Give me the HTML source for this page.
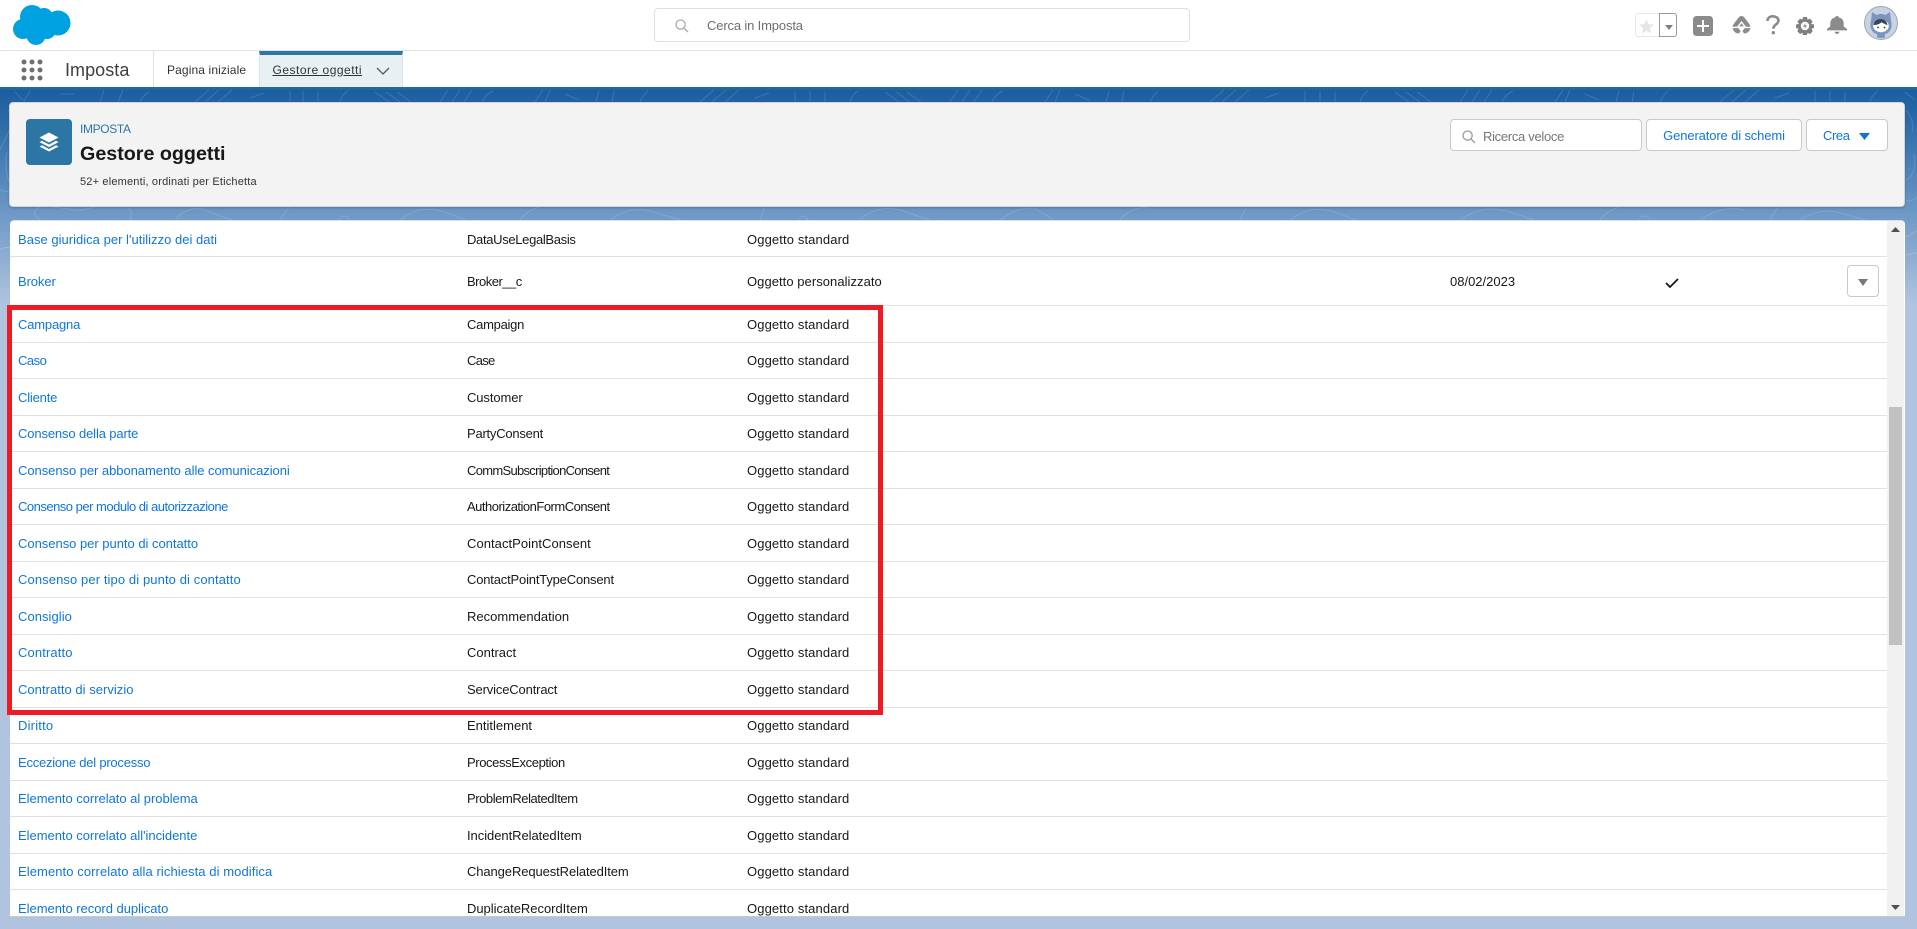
<!DOCTYPE html>
<html lang="it"><head><meta charset="utf-8"><title>Gestore oggetti</title>
<style>
*{box-sizing:border-box}
html,body{margin:0;padding:0;width:1917px;height:929px;overflow:hidden;background:#b0c4df;font-family:"Liberation Sans",sans-serif;font-size:13px;color:#181818}
.a{position:absolute}
.t{position:absolute;white-space:nowrap;line-height:18px;height:18px}
a{color:#0f76d8;text-decoration:none}
#tb .t{margin-top:1px}
#tb .o{left:737px;letter-spacing:.12px}
#tb a{left:8px}
#tb .c{left:457px}
.ln{position:absolute;left:0;width:1877px;height:1px;background:#e0e0e0}
.btn{position:absolute;top:119px;height:32px;background:#fff;border:1px solid #c9c9c9;border-radius:4px;color:#0f76d8;line-height:31px;text-align:center}
</style></head><body>

<!-- background -->
<div class="a" style="left:0;top:90px;width:1917px;height:240px;background:linear-gradient(#1b5e9f 0,#2a6aa8 30px,#6f99c6 125px,#b0c4df 215px)"></div>
<svg class="a" style="left:0;top:90px" width="1917" height="140" fill="none" stroke="#fff" stroke-opacity=".14" stroke-width="1">
<path d="M15 2l8 8M30 1l-6 10M60 4l14 0M100 12l4-12M118 12l5-12M140 12c2-5 5-8 9-10M195 12l14-12M205 12l14-12M218 12l14-12M250 8l14-5M290 12V1M303 12V1M318 12V2M340 12c2-6 4-9 8-11M375 2l14 10M386 2l14 10M397 2l14 10M440 12l8-12M452 12l8-12M464 12l8-12M482 12c3-6 6-9 11-11"/>
<path d="M535 12l8-12M545 12l5-12M565 4l14 6M596 12l3-11M612 12l2-11M640 12c3-6 5-9 8-11M700 12l14-12M712 12l14-12M725 12l14-12M755 8l14-5M795 12V1M810 12V1M825 12V2M850 12c2-6 4-9 8-11M885 2l14 10M896 2l14 10M907 2l14 10M950 12l8-12M962 12l8-12M974 12l8-12M992 12c3-6 6-9 11-11"/>
<path d="M1045 12l8-12M1055 12l5-12M1075 4l14 6M1106 12l3-11M1122 12l2-11M1150 12c3-6 5-9 8-11M1210 12l14-12M1222 12l14-12M1235 12l14-12M1265 8l14-5M1305 12V1M1320 12V1M1335 12V2M1360 12c2-6 4-9 8-11M1395 2l14 10M1406 2l14 10M1417 2l14 10M1460 12l8-12M1472 12l8-12M1484 12l8-12M1502 12c3-6 6-9 11-11M1555 12l8-12M1565 12l5-12M1585 4l14 6M1616 12l3-11M1632 12l2-11M1660 12c3-6 5-9 8-11M1720 12l14-12M1732 12l14-12M1745 12l14-12M1775 8l14-5M1815 12V1M1830 12V1M1845 12V2M1870 12c2-6 4-9 8-11M1905 2l10 8"/>
<path d="M40 130c-10-8-5-13 6-14l30 4c10 1 20-5 30-4M130 130c3-8 0-10-3-14M175 130c8-10 20-14 30-10s20 8 28 10M280 130l10-14M340 128a5 5 0 1 0 1-1M400 130c12-10 24-12 36-10s18 6 30 10M520 130c6-8 14-12 22-14M610 130c16-12 30-12 44-8l26 8M760 130l5-14M800 128a4 4 0 1 0 1-1M860 130c10-10 24-14 40-10l30 10M1000 130c10-8 20-12 34-12l20 12M1120 130c6-8 16-14 30-12M1240 130l7-14M1290 130c12-10 24-12 36-10s18 6 30 10M1460 130c20-14 36-12 50-8l24 8M1600 130c6-8 14-12 24-14M1640 128a5 5 0 1 0 1-1M1700 130c14-10 30-14 44-10M1770 130c4-8 8-12 10-14M1800 130c12-8 24-10 36-8s20 6 30 8"/>
<path d="M0 60c10-20 16-30 8-40M0 100c8 4 12 0 9-8s-4-20-2-30M1906 20c6 8 8 14 6 22M1906 90c8-4 10-14 8-26M1906 110c4 2 8 0 11-3"/>
</svg>
<svg class="a" style="left:0;top:230px" width="10" height="90" fill="none" stroke="#fff" stroke-opacity=".2"><circle cx="4" cy="-10" r="9"/><path d="M0 20c4-3 8-3 10-2"/></svg>
<svg class="a" style="left:1905px;top:225px" width="12" height="60" fill="none" stroke="#fff" stroke-opacity=".2"><path d="M0 12c4 0 8-4 12-6M0 30c4 0 8-2 12-2"/></svg>

<!-- global header -->
<div class="a" style="left:0;top:0;width:1917px;height:87px;background:#fff"></div>
<div class="a" style="left:0;top:50px;width:1917px;height:1px;background:#e3e3e3"></div>
<svg class="a" style="left:13px;top:5px" width="58" height="41" viewBox="0 0 58 41"><g fill="#00a1e0"><circle cx="19" cy="12" r="12"/><circle cx="31" cy="12" r="9"/><circle cx="45" cy="18" r="12.500"/><circle cx="34" cy="25" r="9"/><circle cx="23" cy="30.500" r="9.500"/><circle cx="10" cy="24" r="10"/><rect x="12" y="12" width="28" height="16"/></g></svg>

<!-- top search -->
<div class="a" style="left:654px;top:8px;width:536px;height:34px;border:1px solid #dfdfdf;border-radius:4px;background:#fff"></div>
<svg class="a" style="left:675px;top:19px" width="14" height="14" viewBox="0 0 14 14" fill="none" stroke="#a8a8a8" stroke-width="1.300"><circle cx="5.600" cy="5.600" r="4.600"/><path d="M9 9l4 4"/></svg>
<div class="t" style="left:707px;top:17px;color:#6e6e6e;letter-spacing:-.15px">Cerca in Imposta</div>

<!-- header icons -->
<div class="a" style="left:1635px;top:13px;width:42px;height:24px;border:1px solid #e6e6e6;border-radius:3px;background:#fff"></div>
<div class="a" style="left:1659px;top:13px;width:18px;height:24px;border:1px solid #9a9a9a;border-radius:0 3px 3px 0;background:#fff"></div>
<svg class="a" style="left:1639px;top:19px" width="15" height="15" viewBox="0 0 16 16"><path fill="#e6e6e6" d="M8 0l2.300 5.400 5.700.5-4.300 3.800 1.300 5.800L8 12.400 3 15.500l1.300-5.800L0 5.900l5.700-.5z"/></svg>
<svg class="a" style="left:1665px;top:25px" width="8" height="5"><path fill="#808080" d="M0 0h8L4 5z"/></svg>
<svg class="a" style="left:1693px;top:16px" width="20" height="20" viewBox="0 0 20 20"><rect width="20" height="20" rx="3.500" fill="#8b8b8b"/><path d="M10 4v12M4 10h12" stroke="#fff" stroke-width="2"/></svg>
<svg class="a" style="left:1732px;top:16px" width="19" height="18" viewBox="0 0 21 20"><path fill="#8b8b8b" d="M10.500 0c2 0 3 1.500 4.500 3.500 2 2.500 4.500 5 5.500 8.500H15.500L10.500 5.500 5.500 12H.5C1.500 8.500 4 6 6 3.500 7.500 1.500 8.500 0 10.500 0z"/><path fill="#8b8b8b" d="M.5 13.500h6.500L9.500 17l-2 2.500C4 19.500 1.500 17 .5 13.500zM20.500 13.500H14L11.500 17l2 2.500C17 19.500 19.500 17 20.500 13.500zM10.500 8l2.600 3.500H7.900z"/></svg>
<svg class="a" style="left:1766px;top:15px" width="14" height="20" viewBox="0 0 14 20" fill="none"><path d="M1.500 6c0-3 2.300-4.700 5.300-4.700S12.500 3 12.500 5.600c0 3.800-5.200 3.800-5.200 8.200" stroke="#8b8b8b" stroke-width="2.600"/><circle cx="7.300" cy="17.700" r="1.700" fill="#8b8b8b"/></svg>
<svg class="a" style="left:1796px;top:17px" width="18" height="18" viewBox="0 0 18 18"><path fill="#808080" d="M7 0h4l.6 2.600 2.400-1 2.600 3-1.500 2.300L18 7.500v3.500l-2.500.8 1.200 2.500-2.700 2.800-2.400-1.300L11 18H7l-.6-2.300-2.400 1.300L1.300 14.300 2.500 11.800 0 11V7.500l2.900-.6L1.400 4.600l2.600-3 2.400 1z"/><circle cx="9" cy="9" r="4.200" fill="#fff"/><path d="M9.800 5.800L7 9.600H9L8.200 12.300l2.800-3.900H9z" fill="#808080"/></svg>
<svg class="a" style="left:1827px;top:16px" width="20" height="18" viewBox="0 0 18 20" preserveAspectRatio="none"><path fill="#8b8b8b" d="M9 0c1 0 1.800.8 1.800 1.700C13.600 2.500 15 5 15 8v3c0 1.500 3 2.500 3 4v1H0v-1c0-1.500 3-2.500 3-4V8c0-3 1.400-5.500 4.200-6.300C7.200.8 8 0 9 0zM6.800 17.500h4.400C11 19 10 20 9 20s-2-1-2.200-2.500z"/></svg>
<svg class="a" style="left:1864px;top:6px" width="34" height="34" viewBox="0 0 34 34"><circle cx="17" cy="17" r="16.500" fill="#c6d2e5" stroke="#a5a5a5"/><path fill="#7b95bc" d="M8 6l4.500 3c3-1.300 6-1.300 9 0L26 6l1 9c1.500 5 0 10-4 12.500-1 0-1.500 0-2 .5v3c0 1.300-8 1.300-8 0v-3c-.5-.5-1-.5-2-.5-4-2.500-5.500-7.500-4-12.500z"/><ellipse cx="17" cy="20" rx="7.800" ry="6.200" fill="#fff"/><path fill="#3a4658" d="M9.500 19c1-4.700 5-6.500 8-5.800 3 0 5.200 2 6 5.800-3-.8-5-2.500-6-2.800-2 2-5 2.800-8 2.800z"/><circle cx="14" cy="21.500" r=".9" fill="#333"/><circle cx="20.500" cy="21.500" r=".9" fill="#333"/></svg>

<!-- nav -->
<svg class="a" style="left:21px;top:59px" width="22" height="22" fill="#6f6f6f"><circle cx="3" cy="3" r="2.500"/><circle cx="11" cy="3" r="2.500"/><circle cx="19" cy="3" r="2.500"/><circle cx="3" cy="11" r="2.500"/><circle cx="11" cy="11" r="2.500"/><circle cx="19" cy="11" r="2.500"/><circle cx="3" cy="19" r="2.500"/><circle cx="11" cy="19" r="2.500"/><circle cx="19" cy="19" r="2.500"/></svg>
<div class="a" style="left:65px;top:58px;font-size:18px;line-height:24px;color:#3e3e3e;letter-spacing:.05px">Imposta</div>
<div class="a" style="left:153px;top:51px;width:1px;height:36px;background:#e0e0e0"></div>
<div class="t" style="left:167px;top:61px;font-size:12px;color:#333;letter-spacing:.12px">Pagina iniziale</div>
<div class="a" style="left:259px;top:51px;width:144px;height:36px;background:#e9f0f4;border-top:4px solid #2e77a5;border-left:1px solid #dde3e7;border-right:1px solid #dde3e7"></div>
<div class="t" style="left:272.500px;top:61px;font-size:12px;color:#333;text-decoration:underline;letter-spacing:.5px">Gestore oggetti</div>
<svg class="a" style="left:376px;top:67px" width="14" height="8" fill="none" stroke="#555" stroke-width="1.300"><path d="M1 1l6 6 6-6"/></svg>
<div class="a" style="left:0;top:87px;width:1917px;height:3px;background:#1f6a9c"></div>

<!-- page header card -->
<div class="a" style="left:9px;top:102px;width:1896px;height:105px;background:#f3f3f3;border:1px solid #d4d4d4;border-radius:4px;box-shadow:0 1px 2px rgba(0,0,0,.2)"></div>
<div class="a" style="left:26px;top:119px;width:46px;height:46px;background:#2b76a5;border-radius:4px"></div>
<svg class="a" style="left:39px;top:132px" width="20" height="20" viewBox="0 0 20 20" fill="#fff"><path d="M10 .5l9.500 5L10 10.500.5 5.500z"/><path d="M3 8.800l7 3.700 7-3.700 2.500 1.300-9.500 5-9.500-5z"/><path d="M3 13.300l7 3.700 7-3.700 2.500 1.300L10 19.500.5 14.600z"/></svg>
<div class="t" style="left:80px;top:120px;font-size:12px;color:#2b76a5;letter-spacing:-.35px">IMPOSTA</div>
<div class="t" style="left:80px;top:142px;font-size:19.700px;line-height:24px;height:24px;font-weight:bold;color:#181818">Gestore oggetti</div>
<div class="t" style="left:80px;top:173px;font-size:11px;color:#333;letter-spacing:.18px">52+ elementi, ordinati per Etichetta</div>

<div class="a" style="left:1450px;top:119px;width:192px;height:32px;background:#fff;border:1px solid #c9c9c9;border-radius:4px"></div>
<svg class="a" style="left:1462px;top:130px" width="14" height="14" viewBox="0 0 14 14" fill="none" stroke="#9a9a9a" stroke-width="1.300"><circle cx="5.600" cy="5.600" r="4.600"/><path d="M9 9l4 4"/></svg>
<div class="t" style="left:1483px;top:128px;color:#777;letter-spacing:-.3px">Ricerca veloce</div>
<div class="btn" style="left:1646px;width:156px;letter-spacing:-.13px">Generatore di schemi</div>
<div class="btn" style="left:1806px;width:82px;text-align:left;padding-left:16px;letter-spacing:-.4px">Crea</div>
<svg class="a" style="left:1859px;top:133px" width="11" height="7"><path fill="#0f76d8" d="M0 0h11L5.500 7z"/></svg>

<!-- table -->
<div id="tb" class="a" style="left:10px;top:220px;width:1895px;height:697px;background:#fff;overflow:hidden;border-radius:4px 4px 0 0;border-top:1px solid #ddd;border-bottom:1px solid #c9c9c9">
<div class="ln" style="top:35px"></div><div class="ln" style="top:84px"></div><div class="ln" style="top:121px"></div><div class="ln" style="top:157px"></div><div class="ln" style="top:194px"></div><div class="ln" style="top:230px"></div><div class="ln" style="top:267px"></div><div class="ln" style="top:303px"></div><div class="ln" style="top:340px"></div><div class="ln" style="top:376px"></div><div class="ln" style="top:413px"></div><div class="ln" style="top:449px"></div><div class="ln" style="top:486px"></div><div class="ln" style="top:522px"></div><div class="ln" style="top:559px"></div><div class="ln" style="top:595px"></div><div class="ln" style="top:632px"></div><div class="ln" style="top:668px"></div>

<a class="t" style="top:9px;letter-spacing:.02px">Base giuridica per l'utilizzo dei dati</a><div class="t c" style="top:9px;letter-spacing:-.33px">DataUseLegalBasis</div><div class="t o" style="top:9px">Oggetto standard</div>
<a class="t" style="top:51px;letter-spacing:-.1px">Broker</a><div class="t c" style="top:51px;letter-spacing:-.5px">Broker__c</div><div class="t o" style="top:51px;letter-spacing:.05px">Oggetto personalizzato</div><div class="t" style="left:1440px;top:51px">08/02/2023</div>
<a class="t" style="top:94px;letter-spacing:-.18px">Campagna</a><div class="t c" style="top:94px;letter-spacing:-.27px">Campaign</div><div class="t o" style="top:94px">Oggetto standard</div>
<a class="t" style="top:130px;letter-spacing:-.5px">Caso</a><div class="t c" style="top:130px;letter-spacing:-.7px">Case</div><div class="t o" style="top:130px">Oggetto standard</div>
<a class="t" style="top:167px;letter-spacing:-.18px">Cliente</a><div class="t c" style="top:167px;letter-spacing:-.1px">Customer</div><div class="t o" style="top:167px">Oggetto standard</div>
<a class="t" style="top:203px;letter-spacing:-.13px">Consenso della parte</a><div class="t c" style="top:203px;letter-spacing:-.23px">PartyConsent</div><div class="t o" style="top:203px">Oggetto standard</div>
<a class="t" style="top:240px;letter-spacing:-.05px">Consenso per abbonamento alle comunicazioni</a><div class="t c" style="top:240px;letter-spacing:-.7px">CommSubscriptionConsent</div><div class="t o" style="top:240px">Oggetto standard</div>
<a class="t" style="top:276px;letter-spacing:-.5px">Consenso per modulo di autorizzazione</a><div class="t c" style="top:276px;letter-spacing:-.5px">AuthorizationFormConsent</div><div class="t o" style="top:276px">Oggetto standard</div>
<a class="t" style="top:313px;letter-spacing:-.02px">Consenso per punto di contatto</a><div class="t c" style="top:313px;letter-spacing:.05px">ContactPointConsent</div><div class="t o" style="top:313px">Oggetto standard</div>
<a class="t" style="top:349px;letter-spacing:.1px">Consenso per tipo di punto di contatto</a><div class="t c" style="top:349px;letter-spacing:-.18px">ContactPointTypeConsent</div><div class="t o" style="top:349px">Oggetto standard</div>
<a class="t" style="top:386px;letter-spacing:.05px">Consiglio</a><div class="t c" style="top:386px;letter-spacing:.02px">Recommendation</div><div class="t o" style="top:386px">Oggetto standard</div>
<a class="t" style="top:422px;letter-spacing:.12px">Contratto</a><div class="t c" style="top:422px">Contract</div><div class="t o" style="top:422px">Oggetto standard</div>
<a class="t" style="top:459px;letter-spacing:.03px">Contratto di servizio</a><div class="t c" style="top:459px;letter-spacing:-.15px">ServiceContract</div><div class="t o" style="top:459px">Oggetto standard</div>
<a class="t" style="top:495px;letter-spacing:.2px">Diritto</a><div class="t c" style="top:495px">Entitlement</div><div class="t o" style="top:495px">Oggetto standard</div>
<a class="t" style="top:532px;letter-spacing:-.23px">Eccezione del processo</a><div class="t c" style="top:532px;letter-spacing:-.39px">ProcessException</div><div class="t o" style="top:532px">Oggetto standard</div>
<a class="t" style="top:568px;letter-spacing:-.03px">Elemento correlato al problema</a><div class="t c" style="top:568px;letter-spacing:-.44px">ProblemRelatedItem</div><div class="t o" style="top:568px">Oggetto standard</div>
<a class="t" style="top:605px;letter-spacing:-.03px">Elemento correlato all'incidente</a><div class="t c" style="top:605px;letter-spacing:-.05px">IncidentRelatedItem</div><div class="t o" style="top:605px">Oggetto standard</div>
<a class="t" style="top:641px;letter-spacing:.08px">Elemento correlato alla richiesta di modifica</a><div class="t c" style="top:641px;letter-spacing:-.1px">ChangeRequestRelatedItem</div><div class="t o" style="top:641px">Oggetto standard</div>
<a class="t" style="top:678px;letter-spacing:-.03px">Elemento record duplicato</a><div class="t c" style="top:678px;letter-spacing:-.03px">DuplicateRecordItem</div><div class="t o" style="top:678px">Oggetto standard</div>

<svg class="a" style="left:1655px;top:57px" width="14" height="11" fill="none" stroke="#181818" stroke-width="1.800"><path d="M1 5l4 4 8-8"/></svg>
<div class="a" style="left:1837px;top:44px;width:32px;height:32px;border:1px solid #c9c9c9;border-radius:4px;background:#fff"></div>
<svg class="a" style="left:1848px;top:58px" width="10" height="7"><path fill="#777" d="M0 0h10L5 7z"/></svg>

<!-- scrollbar -->
<div class="a" style="left:1877px;top:0;width:17px;height:697px;background:#f1f1f1"></div>
<div class="a" style="left:1879px;top:186px;width:13px;height:238px;background:#c1c1c1"></div>
<svg class="a" style="left:1881px;top:6px" width="9" height="5"><path fill="#505050" d="M4.500 0L9 5H0z"/></svg>
<svg class="a" style="left:1881px;top:684px" width="9" height="5"><path fill="#505050" d="M0 0h9L4.500 5z"/></svg>
</div>

<!-- red highlight -->
<div class="a" style="left:7px;top:305px;width:876px;height:410px;border:5px solid #ed1c24"></div>
</body></html>
